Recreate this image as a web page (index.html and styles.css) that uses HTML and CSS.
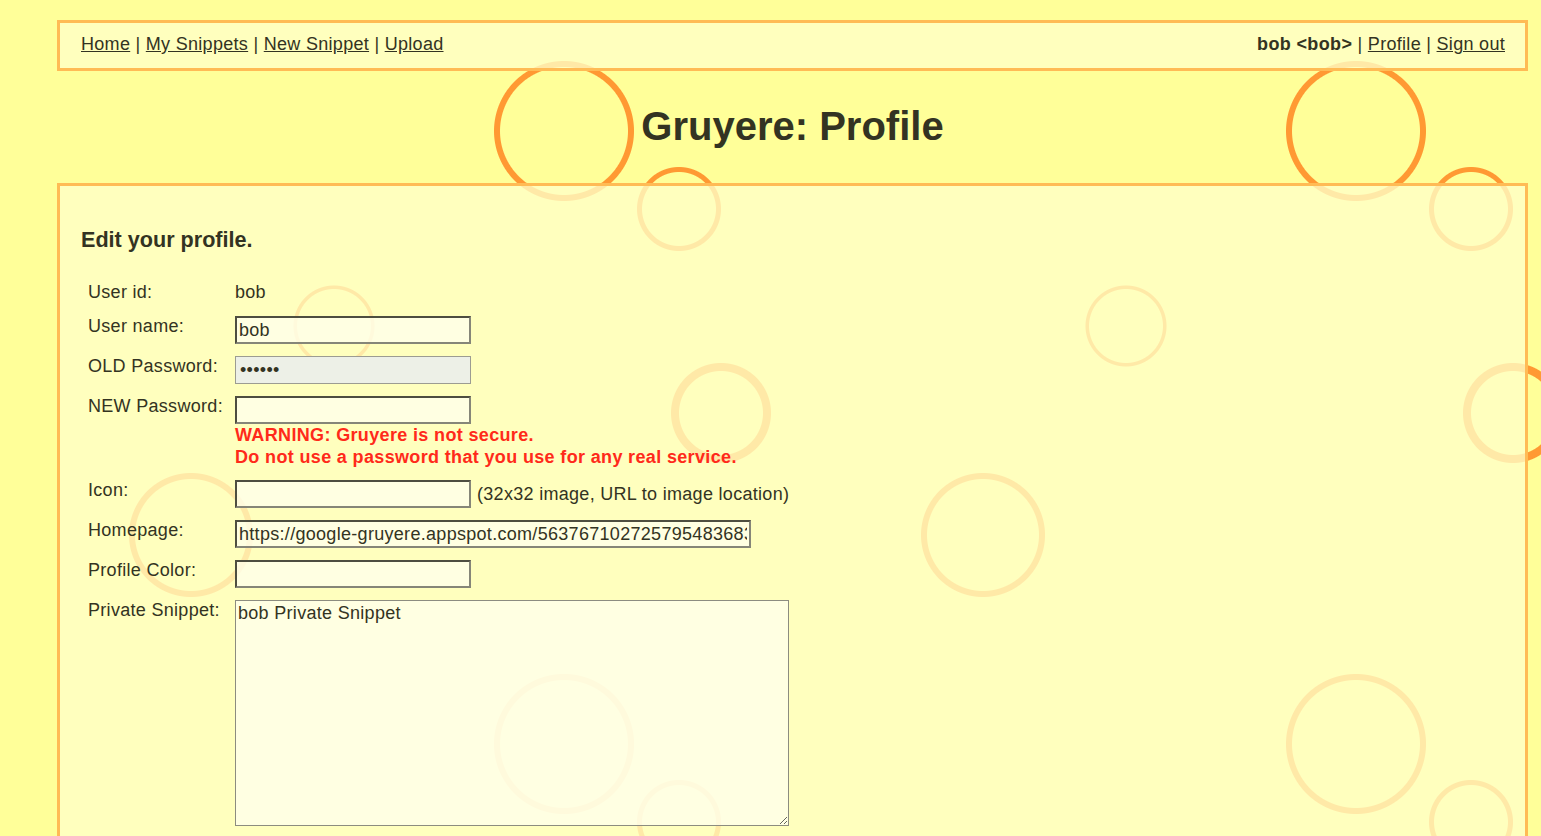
FILE: index.html
```html
<!DOCTYPE html>
<html lang="en">
<head>
<meta charset="utf-8">
<title>Gruyere: Profile</title>
<link rel="stylesheet" href="styles.css">
</head>
<body>
<div class="page">
  <div class="panel menubar">
    <div class="menu-left"><a href="#">Home</a> | <a href="#">My Snippets</a> | <a href="#">New Snippet</a> | <a href="#">Upload</a></div>
    <div class="menu-right"><b>bob &lt;bob&gt;</b> | <a href="#">Profile</a> | <a href="#">Sign out</a></div>
  </div>
  <h1 class="title">Gruyere: Profile</h1>
  <div class="panel content">
    <h2 class="subtitle">Edit your profile.</h2>
    <table class="form">
      <tr class="first">
        <td class="label">User id:</td>
        <td class="value">bob</td>
      </tr>
      <tr>
        <td class="label">User name:</td>
        <td class="value"><input class="field" type="text" value="bob"></td>
      </tr>
      <tr>
        <td class="label">OLD Password:</td>
        <td class="value"><input class="field filled" type="password" value="secret"></td>
      </tr>
      <tr>
        <td class="label">NEW Password:</td>
        <td class="value"><input class="field" type="password" value="">
          <div class="warning">WARNING: Gruyere is not secure.<br>Do not use a password that you use for any real service.</div>
        </td>
      </tr>
      <tr>
        <td class="label">Icon:</td>
        <td class="value"><div class="inline"><input class="field" type="text" value=""><span class="hint">(32x32 image, URL to image location)</span></div></td>
      </tr>
      <tr>
        <td class="label">Homepage:</td>
        <td class="value"><input class="field wide" type="text" value="https://google-gruyere.appspot.com/563767102725795483683/"></td>
      </tr>
      <tr>
        <td class="label">Profile Color:</td>
        <td class="value"><input class="field" type="text" value=""></td>
      </tr>
      <tr>
        <td class="label">Private Snippet:</td>
        <td class="value"><textarea class="snippet">bob Private Snippet</textarea></td>
      </tr>
    </table>
  </div>
</div>
</body>
</html>
```
FILE: styles.css
```css
html {
  margin: 0;
  min-height: 100%;
  background-color: #ffff99;
  background-image:
    radial-gradient(circle at 564px 131px, rgba(255,153,51,0) 63.5px, #ff9933 64.5px, #ff9933 69.5px, rgba(255,153,51,0) 70.5px),
    radial-gradient(circle at 679px 209px, rgba(255,153,51,0) 36.5px, #ff9933 37.5px, #ff9933 41.5px, rgba(255,153,51,0) 42.5px),
    radial-gradient(circle at 334px 326px, rgba(255,153,51,0) 36.5px, #ff9933 37.5px, #ff9933 40px, rgba(255,153,51,0) 41px),
    radial-gradient(circle at 721px 413px, rgba(255,153,51,0) 41.5px, #ff9933 42.5px, #ff9933 49.5px, rgba(255,153,51,0) 50.5px),
    radial-gradient(circle at 191px 535px, rgba(255,153,51,0) 55.5px, #ff9933 56.5px, #ff9933 61.5px, rgba(255,153,51,0) 62.5px);
  background-size: 792px 613px;
  background-repeat: repeat;
}

body {
  margin: 0;
  font-family: "Liberation Sans", Arial, sans-serif;
  font-size: 18px;
  letter-spacing: 0.3px;
  color: #333322;
}

.page {
  padding: 20px 13px 0 57px;
}

.panel {
  background-color: rgba(255, 255, 200, 0.78);
  border: 3px solid #ffbb55;
}

.menubar {
  box-sizing: border-box;
  height: 51px;
  padding: 0 20px 2px 21px;
  display: flex;
  align-items: center;
  justify-content: space-between;
  line-height: 21px;
}

.menubar a {
  color: #333322;
  text-decoration: underline;
}

.menubar b {
  letter-spacing: 0.35px;
}

.title {
  margin: 32px 0 34px;
  font-size: 40px;
  line-height: 46px;
  font-weight: bold;
  letter-spacing: 0;
  text-align: center;
}

.content {
  padding: 20px 21px 40px;
}

.subtitle {
  margin: 22px 0 24px;
  font-size: 21.6px;
  line-height: 24px;
  font-weight: bold;
  letter-spacing: 0;
}

.form {
  border-collapse: collapse;
  border-spacing: 0;
}

.form td {
  padding: 7px 7px 5px;
  line-height: 21px;
  vertical-align: top;
}

.form tr.first td {
  padding: 6px 7px 6px;
}

.form tr td.label {
  box-sizing: border-box;
  width: 147px;
  min-width: 147px;
  max-width: 147px;
  padding-right: 0;
  white-space: nowrap;
}

.field {
  display: block;
  box-sizing: border-box;
  width: 236px;
  height: 28px;
  margin: 0;
  padding: 0 2px;
  border: 2px solid;
  border-color: #4e4e40 #868678 #868678 #4e4e40;
  background-color: rgba(255, 255, 238, 0.75);
  font-family: "Liberation Sans", Arial, sans-serif;
  font-size: 18px;
  letter-spacing: 0.3px;
  color: #333322;
  outline: none;
}

.field.filled {
  border: 1px solid #9c9c92;
  background-color: #edf0e7;
  padding: 0 4px;
}

.field.wide {
  width: 516px;
}

.warning {
  color: #ff2a1a;
  font-weight: bold;
  line-height: 22px;
  letter-spacing: 0.35px;
}

.inline {
  display: flex;
  align-items: center;
  gap: 6px;
}

.hint {
  line-height: 21px;
}

.snippet {
  display: block;
  box-sizing: border-box;
  width: 554px;
  height: 226px;
  margin: 0;
  padding: 2px;
  border: 1px solid #8c8c80;
  background-color: rgba(255, 255, 238, 0.75);
  font-family: "Liberation Sans", Arial, sans-serif;
  font-size: 18px;
  letter-spacing: 0.3px;
  line-height: 21px;
  color: #333322;
}
```
